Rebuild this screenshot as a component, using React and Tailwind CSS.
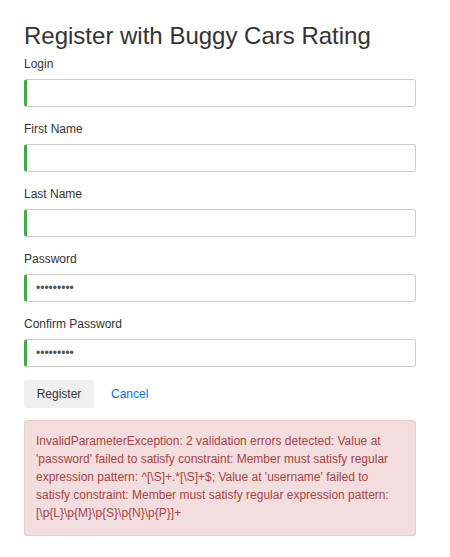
import { useState } from "react";

const fields = [
  { id: "login", label: "Login", type: "text", value: "" },
  { id: "firstName", label: "First Name", type: "text", value: "" },
  { id: "lastName", label: "Last Name", type: "text", value: "" },
  { id: "password", label: "Password", type: "password", value: "Abcd12345" },
  { id: "confirm", label: "Confirm Password", type: "password", value: "Abcd12345" },
];

const errorText =
  "InvalidParameterException: 2 validation errors detected: Value at 'password' failed to satisfy constraint: Member must satisfy regular expression pattern: ^[\\S]+.*[\\S]+$; Value at 'username' failed to satisfy constraint: Member must satisfy regular expression pattern: [\\p{L}\\p{M}\\p{S}\\p{N}\\p{P}]+";

export default function App() {
  const [form, setForm] = useState(
    Object.fromEntries(fields.map((f) => [f.id, f.value]))
  );

  return (
    <div className="min-h-screen bg-white font-['Liberation_Sans',Arial,sans-serif] text-[#333]">
      <div className="w-[392px] ml-[24px] pt-[23px]">
        {/* TITLE */}
        <h2 className="text-[24px] leading-[26px] font-normal mb-[6px]">
          Register with Buggy Cars Rating
        </h2>

        {/* FIELDS */}
        {fields.map((f) => (
          <div key={f.id} className="mb-[13px]">
            <label
              htmlFor={f.id}
              className="block text-[12px] leading-[18px] mb-[6px]"
            >
              {f.label}
            </label>
            <input
              id={f.id}
              type={f.type}
              value={form[f.id]}
              onChange={(e) => setForm({ ...form, [f.id]: e.target.value })}
              className="block w-full h-[28px] px-[9px] text-[12px] text-[#555] bg-white border border-[#ccc] border-l-[3px] border-l-[#42a948] rounded-[3px] outline-none"
            />
          </div>
        ))}

        {/* ACTIONS */}
        <div className="flex items-center">
          <button className="h-[28px] w-[70px] bg-[#efefef] rounded-[3px] text-[12px] text-[#333]">
            Register
          </button>
          <a href="#" className="ml-[17px] text-[12px] text-[#0275d8]">
            Cancel
          </a>
        </div>

        {/* ERROR */}
        <div className="mt-[12px] px-[11px] pt-[11px] pb-[13px] border border-[#ebcccc] bg-[#f2dede] rounded-[3px] text-[12px] leading-[18px] text-[#a94442]">
          {errorText}
        </div>
      </div>
    </div>
  );
}
